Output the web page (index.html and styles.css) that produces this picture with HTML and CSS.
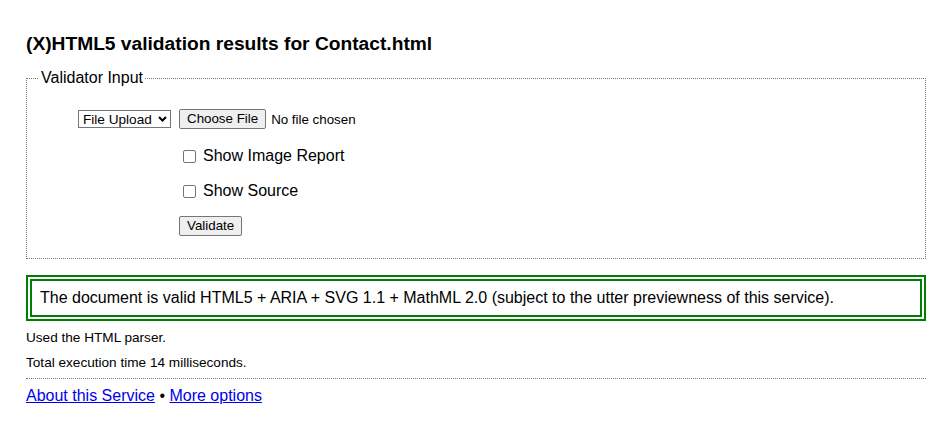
FILE: index.html
```html
<!DOCTYPE html>
<html lang="en">
<head>
<meta charset="utf-8">
<title>Validation results</title>
<link rel="stylesheet" href="styles.css">
</head>
<body>
<h2 class="title">(X)HTML5 validation results for Contact.html</h2>
<fieldset class="input-box">
  <legend class="legend">Validator Input</legend>
  <div class="form-grid">
    <div class="cell-label">
      <span class="select">File Upload
        <svg class="chev" width="9" height="6" viewBox="0 0 9 6"><path d="M1 1 L4.5 4.5 L8 1" fill="none" stroke="#000" stroke-width="2"/></svg>
      </span>
    </div>
    <div class="cell-field file-row">
      <span class="btn">Choose File</span>
      <span class="file-name">No file chosen</span>
    </div>
    <div class="cell-field check-row first">
      <span class="checkbox"></span>
      <span class="check-label">Show Image Report</span>
    </div>
    <div class="cell-field check-row">
      <span class="checkbox"></span>
      <span class="check-label">Show Source</span>
    </div>
    <div class="cell-field submit-row">
      <span class="btn">Validate</span>
    </div>
  </div>
</fieldset>
<div class="success">The document is valid HTML5 + ARIA + SVG 1.1 + MathML 2.0 (subject to the utter previewness of this service).</div>
<p class="stats first">Used the HTML parser.</p>
<p class="stats">Total execution time 14 milliseconds.</p>
<div class="footer">
  <a class="link" href="#">About this Service</a> &bull; <a class="link" href="#">More options</a>
</div>
</body>
</html>
```
FILE: styles.css
```css
html, body {
  margin: 0;
  background: #fff;
}
body {
  padding: 0 14px 0 26px;
  font-family: "Liberation Sans", Arial, sans-serif;
  font-size: 16px;
  color: #000;
}
.title {
  font-size: 19.2px;
  font-weight: bold;
  margin: 33px 0 14px;
  line-height: 22px;
}
.input-box {
  margin: 0;
  border: 1px dotted #777;
  padding: 22px 12px 22px;
}
.legend {
  padding: 0 2px;
  font-size: 16px;
}
.form-grid {
  display: grid;
  grid-template-columns: 132px auto;
  column-gap: 8px;
  align-items: center;
}
.cell-label {
  grid-column: 1;
  justify-self: end;
}
.cell-field {
  grid-column: 2;
}
.select {
  display: flex;
  align-items: center;
  box-sizing: border-box;
  width: 93px;
  height: 18px;
  border: 1px solid #767676;
  border-radius: 0;
  padding: 0 3px 0 4px;
  font-size: 13.6px;
  justify-content: space-between;
  background: #fff;
}
.chev {
  display: block;
}
.file-row {
  display: flex;
  align-items: center;
  gap: 5px;
  font-size: 13.33px;
}
.btn {
  display: inline-flex;
  align-items: center;
  box-sizing: border-box;
  height: 20px;
  padding: 0 7px;
  background: #efefef;
  border: 1px solid #767676;
  border-radius: 2px;
  font-size: 13.33px;
  line-height: 18px;
}
.check-row {
  display: flex;
  align-items: center;
  height: 18px;
  margin-top: 17px;
}
.check-row.first {
  margin-top: 18px;
}
.checkbox {
  box-sizing: border-box;
  width: 13px;
  height: 13px;
  border: 1px solid #767676;
  border-radius: 2px;
  margin-left: 4px;
  background: #fff;
}
.check-label {
  margin-left: 7px;
  line-height: 18px;
}
.submit-row {
  margin-top: 16px;
  display: flex;
}
.success {
  margin-top: 16px;
  border: 6px double #008000;
  padding: 8px;
  line-height: 18px;
}
.stats {
  margin: 9px 0 0;
  font-size: 13.6px;
  line-height: 16px;
}
.stats.first {
  margin-top: 9px;
}
.footer {
  margin-top: 7px;
  border-top: 1px dotted #777;
  padding-top: 8px;
  line-height: 18px;
}
.link {
  color: #0000ee;
}
```
